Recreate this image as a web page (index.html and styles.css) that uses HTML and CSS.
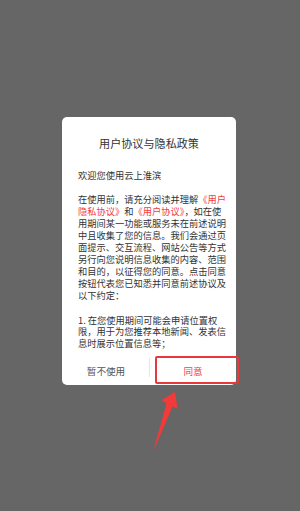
FILE: index.html
```html
<!DOCTYPE html>
<html lang="zh-CN">
<head>
<meta charset="utf-8">
<link rel="stylesheet" href="styles.css">
</head>
<body>
<div class="screen">
  <div class="dialog">
    <div class="title">用户协议与隐私政策</div>
    <div class="content">
      <p>欢迎您使用云上淮滨</p>
      <p>在使用前，请充分阅读并理解<span class="link">《用户</span><br><span class="link">隐私协议》</span>和<span class="link">《用户协议》</span>，如在使用期间某一功能或服务未在前述说明中且收集了您的信息。我们会通过页面提示、交互流程、网站公告等方式另行向您说明信息收集的内容、范围和目的，以征得您的同意。点击同意按钮代表您已知悉并同意前述协议及以下约定：</p>
      <p class="item">1. 在您使用期间可能会申请位置权限，用于为您推荐本地新闻、发表信息时展示位置信息等；</p>
    </div>
    <div class="actions">
      <div class="btn btn-cancel">暂不使用</div>
      <div class="sep"></div>
      <div class="btn btn-ok">同意</div>
    </div>
    <div class="highlight"></div>
  </div>
  <svg class="arrow" width="300" height="511" viewBox="0 0 300 511">
    <polygon points="175,392 161.5,400 166.5,403.5 153,452 172.5,406.5 177.5,408.5" fill="#f23a3a"/>
  </svg>
</div>
</body>
</html>
```
FILE: styles.css
```css
html, body {
  margin: 0;
  padding: 0;
}
body {
  background: #666666;
  font-family: "Noto Sans CJK SC", "Noto Sans", sans-serif;
}
.screen {
  position: relative;
  width: 300px;
  height: 511px;
  overflow: hidden;
  padding-top: 117px;
  box-sizing: border-box;
}
.dialog {
  position: relative;
  margin-left: 62px;
  width: 174px;
  height: 268px;
  background: #ffffff;
  border-radius: 5px;
  display: flex;
  flex-direction: column;
}
.title {
  padding-top: 18px;
  font-size: 11.1px;
  line-height: 16px;
  color: #333333;
  text-align: center;
}
.content {
  margin-top: 18px;
  padding: 0 10px 0 16px;
  height: 187px;
  overflow: hidden;
  font-size: 9.25px;
  line-height: 12px;
  color: #333333;
}
.content p {
  margin: 0 0 12px 0;
  width: 148.5px;
}
.content p.item {
  margin-top: 14px;
  line-height: 11.3px;
}
.link {
  color: #ef4040;
}
.actions {
  flex: 1;
  display: flex;
  align-items: center;
}
.btn {
  flex: 1;
  text-align: center;
  font-size: 9.6px;
  line-height: 14px;
}
.btn-cancel {
  color: #555555;
  padding-left: 1px;
}
.btn-ok {
  color: #ef4545;
}
.sep {
  width: 1px;
  height: 19px;
  background: #e6e6e6;
  margin-top: -7px;
}
.highlight {
  position: absolute;
  left: 93px;
  top: 239px;
  width: 84px;
  height: 28px;
  box-sizing: border-box;
  border: 2px solid #e8383b;
  border-radius: 2px;
}
.arrow {
  position: absolute;
  left: 0;
  top: 0;
}
```
